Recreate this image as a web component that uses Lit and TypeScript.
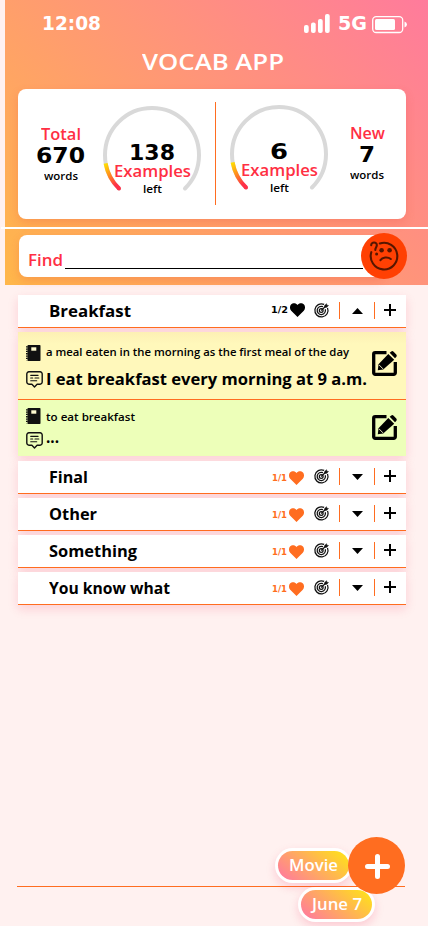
import { LitElement, html, css, svg, nothing } from "lit";
import { customElement, property } from "lit/decorators.js";

/** A one-line label whose letters are widened to fill a given width. */
@customElement("fit-text")
class FitText extends LitElement {
  static styles = css`
    :host { display: block; white-space: nowrap; flex: none; }
    .run { display: inline-block; white-space: pre; transform-origin: 0 50%; }
  `;
  @property({ type: Number }) w = 0;
  @property() text = "";
  updated() {
    const run = this.renderRoot.querySelector(".run") as HTMLElement;
    run.style.transform = "none";
    const natural = run.getBoundingClientRect().width;
    run.style.transform = `scaleX(${this.w / natural})`;
    this.style.width = `${this.w}px`;
  }
  render() {
    return html`<span class="run">${this.text}</span>`;
  }
}

const label = (text: string, w: number, cls: string) =>
  html`<fit-text class=${cls} .w=${w} .text=${text}></fit-text>`;

const heart = html`<svg class="heart" viewBox="0 0 15 14"><path d="M7.500 14 1.200 7.800C-.5 6-.3 3.100 1 1.600 2.700-.4 5.900-.4 7.500 2 9.100-.4 12.300-.4 14 1.600c1.300 1.500 1.500 4.400-.2 6.200z" fill="currentColor"/></svg>`;

const target = html`<svg class="target" viewBox="0 0 16 16" fill="none" stroke="#111" stroke-width="1.350">
  <path d="M10.800 1.500A7 7 0 1 0 14.400 5.200"/><path d="M9.600 3.900A4.400 4.400 0 1 0 12 6.600"/><circle cx="7.700" cy="8" r="2"/>
  <path d="M7.700 8 12.500 3.300"/><path d="M11.300 4.700 11.400 2.600 13.400.8 13.600 2.400 15.400 2.700 13.500 4.600z" fill="#111" stroke-width=".6"/></svg>`;

const book = html`<svg class="book" viewBox="0 0 15 16"><rect x="1.500" y="0" width="13" height="16" rx=".8" fill="#111"/>
  <path d="M.9 1.200v14" stroke="#111" stroke-width="1.800" stroke-dasharray="1.300 1"/><rect x="5.300" y="2.300" width="5" height="3.400" fill="#fffbd0"/></svg>`;

const note = html`<svg class="note" viewBox="0 0 17 17" fill="none" stroke="#111" stroke-width="1.400" stroke-linecap="round" stroke-linejoin="round">
  <path d="M2.900.8h11.200a2.100 2.100 0 0 1 2.100 2.100v8.200a2.100 2.100 0 0 1-2.100 2.100h-3L8.500 15.900 5.900 13.200h-3A2.100 2.100 0 0 1 .8 11.100V2.900A2.100 2.100 0 0 1 2.900.8z"/>
  <path d="M4.700 4.300h7.400M4.700 7h2M9 7h3.800M4.700 9.700h6" stroke-width="1.150"/></svg>`;

const edit = html`<svg class="edit" viewBox="0 0 25 25">
  <path d="M14.500 1.700H3.200a1.500 1.500 0 0 0-1.500 1.500v18.600a1.500 1.500 0 0 0 1.500 1.500h18.600a1.500 1.500 0 0 0 1.500-1.500V11" fill="none" stroke="#000" stroke-width="3.300"/>
  <path d="M16.300 2.900 22.200 8.700 11.200 18.500 5.800 19.300 6.500 13.200z" fill="#000"/><path d="M17.700 1.700 19.300.4q1.200-.8 2.300.3l2.700 2.700q1 1.200.1 2.300L23 7.300z" fill="#000"/>
  <path d="M6.900 13.700 11 17.900" stroke="#fffbd0" stroke-width=".9"/></svg>`;

const plus = html`<svg class="plus" viewBox="0 0 12 12"><path d="M6 0v12M0 6h12" stroke="#000" stroke-width="2"/></svg>`;

const confused = html`<svg class="face" viewBox="0 0 30 30" fill="none" stroke="#571600" stroke-width="2.100" stroke-linecap="round">
  <path d="M10.800 2.500A13.300 13.300 0 1 1 2.300 11.200"/>
  <path d="M2.200 4.300C2 .5 8.200.6 7.800 4.400 7.600 6.800 6.200 6.500 6.300 9"/>
  <circle cx="7.600" cy="13" r="1.500" fill="#571600" stroke="none"/>
  <circle cx="12.600" cy="9.200" r="2.300" fill="#571600" stroke="none"/><circle cx="20.600" cy="9.200" r="2.300" fill="#571600" stroke="none"/>
  <path d="M11.400 19.200C13.400 16.300 18.600 15.500 21.800 18"/></svg>`;

const gauge = (id: string) => html`<svg class="arc" viewBox="0 0 98 98">
  <defs><linearGradient id=${id} x1="0" y1="0" x2=".5" y2="1"><stop offset="0" stop-color="#ffe000"/><stop offset=".5" stop-color="#ff8a20"/><stop offset="1" stop-color="#ff3048"/></linearGradient></defs>
  <path d="M16 82.500A47 47 0 1 1 82 82.500" fill="none" stroke="#d9d9d9" stroke-width="4" stroke-linecap="round"/>
  ${svg`<path d="M2.600 57.300A47 47 0 0 0 16 82.500" fill="none" stroke="url(#${id})" stroke-width="4"/>`}
  <circle cx="16" cy="82.500" r="2" fill="#ff3048"/></svg>`;

interface Word { name: string; w: number; count: string; open?: boolean }
const words: Word[] = [
  { name: "Breakfast", w: 82, count: "1/2", open: true },
  { name: "Final", w: 39, count: "1/1" },
  { name: "Other", w: 48, count: "1/1" },
  { name: "Something", w: 88, count: "1/1" },
  { name: "You know what", w: 121, count: "1/1" },
];

@customElement("app-root")
class AppRoot extends LitElement {
  static styles = css`
    :host { display: block; width: 428px; height: 926px; overflow: hidden; background: #fff1f0; font-family: "Open Sans", sans-serif; font-weight: 700; color: #000; }
    * { box-sizing: border-box; }
    svg { display: block; flex: none; overflow: visible; }
    .page { position: relative; height: 926px; overflow: hidden; }
    .header { margin-left: 5px; height: 285px; background: linear-gradient(45deg, #ffb74a, #ff7b9c); padding: 0 22px 0 13px; }
    .status { height: 47px; display: flex; align-items: center; padding: 0 0 0 24px; color: #fff; }
    .num { font-family: "DejaVu Sans", sans-serif; font-weight: 700; }
    .clock { font-size: 19px; line-height: 47px; }
    .signal { width: 26px; height: 19px; margin-left: 203px; }
    .net { font-size: 19px; line-height: 47px; margin-left: 8px; }
    .battery { width: 35px; height: 17px; margin: 1px 0 0 5px; }
    .title { display: flex; justify-content: center; height: 42px; color: #fff; font-size: 21px; line-height: 31px; font-weight: 600; padding-left: 2px; }
    .card { height: 130px; background: #fff; border-radius: 8px; display: flex; box-shadow: 0 4px 10px rgba(230, 70, 60, .22); }
    .stat { width: 85px; flex: none; display: flex; flex-direction: column; align-items: center; padding-top: 34px; }
    .stat.new { width: 78px; padding-top: 33px; }
    .red { color: #ff2f43; font-size: 15.500px; line-height: 22px; font-weight: 600; }
    .big { font-size: 21.500px; line-height: 22px; }
    .small { font-size: 11px; line-height: 16px; font-weight: 600; }
    .stat .small { margin-top: 1px; }
    .gauge { width: 98px; flex: none; display: grid; margin-top: 17px; height: 98px; }
    .gauge.b { margin-left: 14px; margin-top: 16px; }
    .arc, .inside { grid-area: 1 / 1; }
    .arc { width: 98px; height: 98px; }
    .inside { display: flex; flex-direction: column; align-items: center; padding-top: 36px; }
    .inside .big { line-height: 21px; }
    .inside .red { line-height: 17px; }
    .inside .small { line-height: 15px; margin-top: 1px; }
    .split { flex: none; width: 1px; height: 103px; margin: 13px 0 0 14px; background: #ff6d20; }
    .rule { height: 2px; background: #fff; margin: 8px -22px 4px -17px; }
    .find { display: flex; align-items: center; height: 46px; margin-left: 1px; width: 388px; }
    .box { width: 365px; height: 42px; border-radius: 8px; background: #fff; box-shadow: 0 4px 10px rgba(230, 70, 60, .22); display: flex; padding: 15px 0 0 9px; }
    .box .red { margin-top: -1px; }
    .line { height: 1px; background: #000; width: 298px; margin: 18px 0 0 2px; }
    .ask { width: 46px; height: 46px; border-radius: 50%; background: #ff4003; margin-left: -23px; flex: none; display: grid; place-items: center; }
    .face { width: 30px; height: 30px; }
    .list { margin: 10px 22px 0 18px; display: flex; flex-direction: column; gap: 4px; }
    .row { height: 33px; background: #fff; border-bottom: 1px solid #ff6d20; box-shadow: 0 4px 10px rgba(235, 20, 70, .15); display: flex; align-items: center; padding: 0 10px 0 31px; }
    .name { font-size: 15.500px; line-height: 22px; }
    .tools { margin-left: auto; display: flex; align-items: center; height: 32px; }
    .count { color: #ff6d20; font-size: 9px; margin-top: 2px; line-height: 12px; }
    .heart { color: #ff6d20; width: 15px; height: 14px; margin: 2px 10px 0 2px; }
    .open .count, .open .heart { color: #000; margin-top: -3px; }
    .open .heart { margin-right: 9px; }
    .open .count { margin-top: -2px; }
    .target { width: 15px; height: 15px; margin-top: -1px; }
    .bar { width: 1px; height: 17px; background: #ff6d20; margin: -2px 0 0 10px; }
    .tri { width: 11px; height: 6px; margin-left: 12px; }
    .bar.two { margin-left: 11px; }
    .plus { width: 12px; height: 12px; margin: -2px 0 0 9px; }
    .panel { box-shadow: 0 4px 10px rgba(235, 20, 70, .15); height: 124px; margin-bottom: 1px; }
    .sense { display: flex; align-items: center; justify-content: space-between; padding: 0 9px 0 8px; }
    .a { height: 68px; background: linear-gradient(#fdf0b4, #fff8bb 12px); border-bottom: 1px solid #ff6d20; }
    .b2 { height: 56px; background: #edffb9; }
    .texts { display: flex; flex-direction: column; gap: 9px; }
    .b2 .texts { gap: 7px; }
    .pair { display: flex; align-items: center; height: 17px; }
    .book { width: 15px; height: 16px; margin-right: 5px; }
    .note { width: 17px; height: 17px; margin-right: 3px; }
    .a .note { margin-top: 1px; }
    .def { font-size: 11.500px; line-height: 16px; font-weight: 600; margin-top: -2px; }
    .b2 .def { margin-top: 1px; }
    .ex { font-size: 16px; line-height: 18px; }
    .b2 .ex { margin-top: -7px; }
    .edit { width: 25px; height: 25px; margin-top: -5px; }
    .b2 .edit { margin-top: -1px; }
    .dock { position: absolute; left: 17px; right: 23px; top: 886px; height: 1px; background: #ff6d20; }
    .pill { position: absolute; width: 77px; height: 35px; border-radius: 18px; background: #fff; padding: 3px; box-shadow: 0 4px 10px rgba(235, 20, 70, .17); }
    .fill { height: 29px; border-radius: 15px; background: linear-gradient(40deg, #ff7b9c 5%, #ffe11a 95%); color: #fff; font-size: 15.500px; line-height: 28px; display: flex; justify-content: center; font-weight: 600; }
    .movie { left: 275px; top: 848px; }
    .june { left: 298px; top: 887px; }
    .fab { position: absolute; left: 348px; top: 837px; width: 57px; height: 57px; border-radius: 50%; background: #ff6d20; display: grid; place-items: center; }
    .fab svg { width: 25px; height: 25px; margin: 2px 0 0 1px; }
  `;

  private row(w: Word) {
    return html`<div class="row ${w.open ? "open" : ""}">
      ${label(w.name, w.w, "name")}
      <div class="tools">
        ${label(w.count, w.open ? 17 : 15, "count num")}${heart}${target}
        <div class="bar"></div>
        <svg class="tri" viewBox="0 0 11 6"><path d=${w.open ? "M0 6 5.500 0 11 6z" : "M0 0H11L5.500 6z"} /></svg>
        <div class="bar two"></div>${plus}
      </div>
    </div>${w.open ? this.panel() : nothing}`;
  }

  private panel() {
    return html`<div class="panel">
      <div class="sense a"><div class="texts">
        <div class="pair">${book}${label("a meal eaten in the morning as the first meal of the day", 303, "def")}</div>
        <div class="pair">${note}${label("I eat breakfast every morning at 9 a.m.", 321, "ex")}</div>
      </div>${edit}</div>
      <div class="sense b2"><div class="texts">
        <div class="pair">${book}${label("to eat breakfast", 89, "def")}</div>
        <div class="pair">${note}${label("...", 13, "ex")}</div>
      </div>${edit}</div>
    </div>`;
  }

  render() {
    return html`<div class="page">
      <div class="header">
        <div class="status">
          ${label("12:08", 59, "clock num")}
          <svg class="signal" viewBox="0 0 26 19" fill="#fff"><rect y="11" width="4.700" height="8" rx="2"/><rect x="7" y="8.500" width="4.700" height="10.500" rx="2"/><rect x="14" y="5" width="4.700" height="14" rx="2"/><rect x="21" width="4.700" height="19" rx="2"/></svg>
          ${label("5G", 29, "net num")}
          <svg class="battery" viewBox="0 0 35 17"><rect x=".7" y=".7" width="30" height="15.800" rx="3.500" fill="none" stroke="#fff" stroke-width="1.300"/><rect x="3" y="3" width="20" height="11" rx="1.500" fill="#fff"/><path d="M32.500 5.500q2.500 1 2.500 3t-2.500 3z" fill="#fff"/></svg>
        </div>
        <div class="title">${label("VOCAB APP", 142, "")}</div>
        <div class="card">
          <div class="stat">${label("Total", 40, "red")}${label("670", 49, "big num")}${label("words", 34, "small")}</div>
          <div class="gauge">${gauge("g1")}<div class="inside">${label("138", 46, "big num")}${label("Examples", 77, "red")}${label("left", 19, "small")}</div></div>
          <div class="split"></div>
          <div class="gauge b">${gauge("g2")}<div class="inside">${label("6", 18, "big num")}${label("Examples", 77, "red")}${label("left", 19, "small")}</div></div>
          <div class="stat new">${label("New", 35, "red")}${label("7", 16, "big num")}${label("words", 34, "small")}</div>
        </div>
        <div class="rule"></div>
        <div class="find">
          <div class="box">${label("Find", 35, "red")}<div class="line"></div></div>
          <div class="ask">${confused}</div>
        </div>
      </div>
      <div class="list">${words.map((w) => this.row(w))}</div>
      <div class="dock"></div>
      <div class="pill movie"><div class="fill">${label("Movie", 49, "")}</div></div>
      <div class="pill june"><div class="fill">${label("June 7", 50, "")}</div></div>
      <div class="fab"><svg viewBox="0 0 25 25"><path d="M12.500 2.500v20M2.500 12.500h20" stroke="#fff" stroke-width="5" stroke-linecap="round"/></svg></div>
    </div>`;
  }
}
